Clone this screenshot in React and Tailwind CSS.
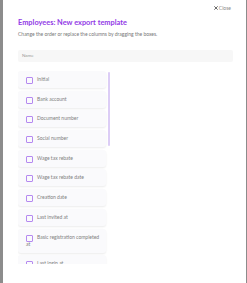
const columns = [
  "Initial",
  "Bank account",
  "Document number",
  "Social number",
  "Wage tax rebate",
  "Wage tax rebate date",
  "Creation date",
  "Last invited at",
  "Basic registration completed at",
  "Last login at",
];

const App = () => {
  return (
    <div className="flex h-[283px] w-[247px] overflow-hidden bg-[#8c8c8c] pl-[3px] pr-[1px] font-['Lato',sans-serif]">
      <div className="flex flex-1 flex-col bg-white pl-[15px] pr-[13px]">
        {/* Fermer */}
        <div className="flex justify-end pt-[5px] pr-[2px]">
          <button className="flex items-center gap-[1px] text-[5px] leading-[6px] text-[#8a8a8a]">
            <svg width="4" height="4" viewBox="0 0 10 10" className="text-[#555]">
              <path d="M1.5 1.5 L8.5 8.5 M8.5 1.5 L1.5 8.5" stroke="currentColor" strokeWidth="2.2" strokeLinecap="round" />
            </svg>
            Close
          </button>
        </div>

        <h1 className="mt-[7px] text-[7.4px] font-bold leading-[9px] text-[#9239e6]">
          Employees: New export template
        </h1>
        <p className="mt-[4px] text-[5px] leading-[7px] text-[#777]">
          Change the order or replace the columns by dragging the boxes.
        </p>

        <div className="mt-[12px] flex h-[12px] items-center rounded-[2px] bg-[#f7f7f7] pl-[4px] text-[4.5px] text-[#999]">
          Name
        </div>

        {/* Liste des colonnes */}
        <div className="mt-[9px] flex h-[193px] w-[92px] gap-[2px] overflow-hidden">
          <div className="flex w-[88px] flex-col gap-[2.7px]">
            {columns.map((col) => (
              <div
                key={col}
                className="shrink-0 rounded-[3px] bg-[#fafafc] py-[5px] pl-[8px] pr-[6px] text-[5px] leading-[7px] text-[#808080] shadow-[0_1px_2px_rgba(0,0,0,0.08)]"
              >
                <span className="mr-[4px] inline-block h-[7px] w-[7px] translate-y-[1px] rounded-[1px] border-[1.4px] border-[#b589f0] align-top"></span>
                {col}
              </div>
            ))}
          </div>
          <div className="w-[2px] pt-[1px]">
            <div className="h-[74px] w-[1.5px] rounded-full bg-[#dccdf6]"></div>
          </div>
        </div>
      </div>
    </div>
  );
};

export default App;
